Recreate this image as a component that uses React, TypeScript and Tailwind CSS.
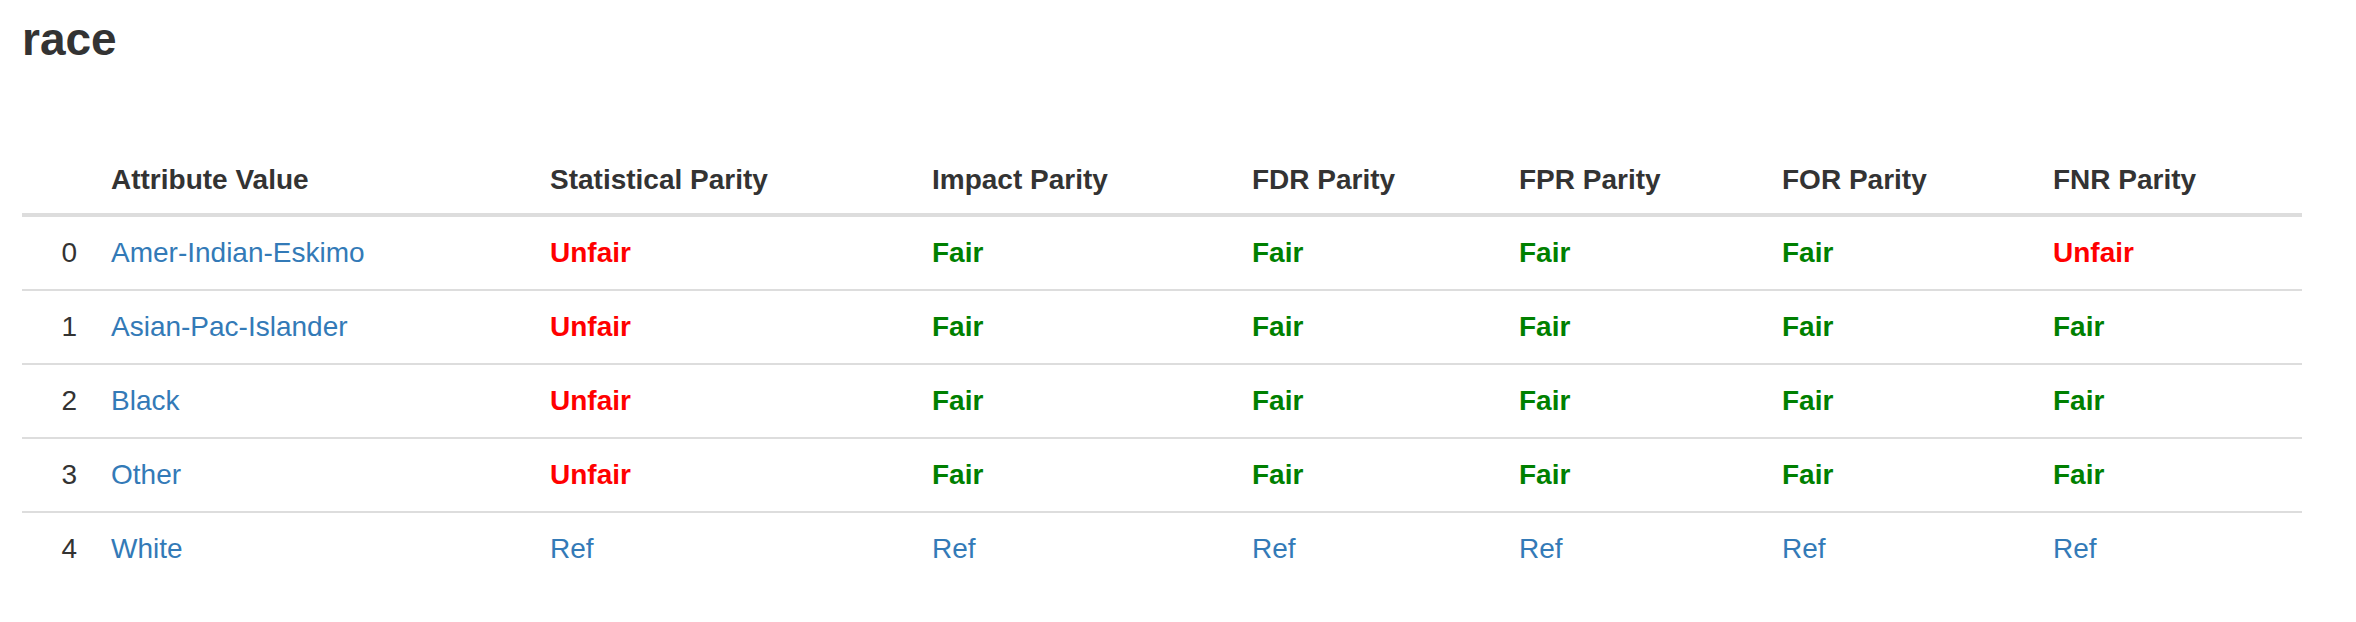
type Status = "Fair" | "Unfair" | "Ref";

type Row = {
    idx: number;
    value: string;
    metrics: Status[];
};

const headers = [
    "Statistical Parity",
    "Impact Parity",
    "FDR Parity",
    "FPR Parity",
    "FOR Parity",
    "FNR Parity",
];

const rows: Row[] = [
    { idx: 0, value: "Amer-Indian-Eskimo", metrics: ["Unfair", "Fair", "Fair", "Fair", "Fair", "Unfair"] },
    { idx: 1, value: "Asian-Pac-Islander", metrics: ["Unfair", "Fair", "Fair", "Fair", "Fair", "Fair"] },
    { idx: 2, value: "Black", metrics: ["Unfair", "Fair", "Fair", "Fair", "Fair", "Fair"] },
    { idx: 3, value: "Other", metrics: ["Unfair", "Fair", "Fair", "Fair", "Fair", "Fair"] },
    { idx: 4, value: "White", metrics: ["Ref", "Ref", "Ref", "Ref", "Ref", "Ref"] },
];

const cols = "grid grid-cols-[89px_439px_382px_320px_267px_263px_271px_1fr]";

const StatusCell = ({ status }: { status: Status }) => {
    if (status === "Unfair") return <div className="font-bold text-[#ff0000]">Unfair</div>;
    if (status === "Fair") return <div className="font-bold text-[#008000]">Fair</div>;
    return <div className="text-[#337ab7]">Ref</div>;
};

export default function App() {
    return (
        <div className="bg-white min-h-screen pl-[22px] pr-[54px] text-[#333] font-['Liberation_Sans',Arial,sans-serif]">
            <h2 className="pt-[16px] text-[46px] leading-[46px] font-bold">race</h2>
            <div className="mt-[82px] text-[28px] leading-[40px]">
                <div className={`${cols} pt-[16px] pb-[13px] border-b-4 border-[#dddddd] font-bold`}>
                    <div />
                    <div>Attribute Value</div>
                    {headers.map((h) => (
                        <div key={h}>{h}</div>
                    ))}
                </div>
                {rows.map((r, i) => (
                    <div
                        key={r.idx}
                        className={`${cols} py-[16px] ${i < rows.length - 1 ? "border-b-2 border-[#dddddd]" : ""}`}
                    >
                        <div className="text-right pr-[34px]">{r.idx}</div>
                        <div className="text-[#337ab7]">{r.value}</div>
                        {r.metrics.map((m, j) => (
                            <StatusCell key={j} status={m} />
                        ))}
                    </div>
                ))}
            </div>
        </div>
    );
}
